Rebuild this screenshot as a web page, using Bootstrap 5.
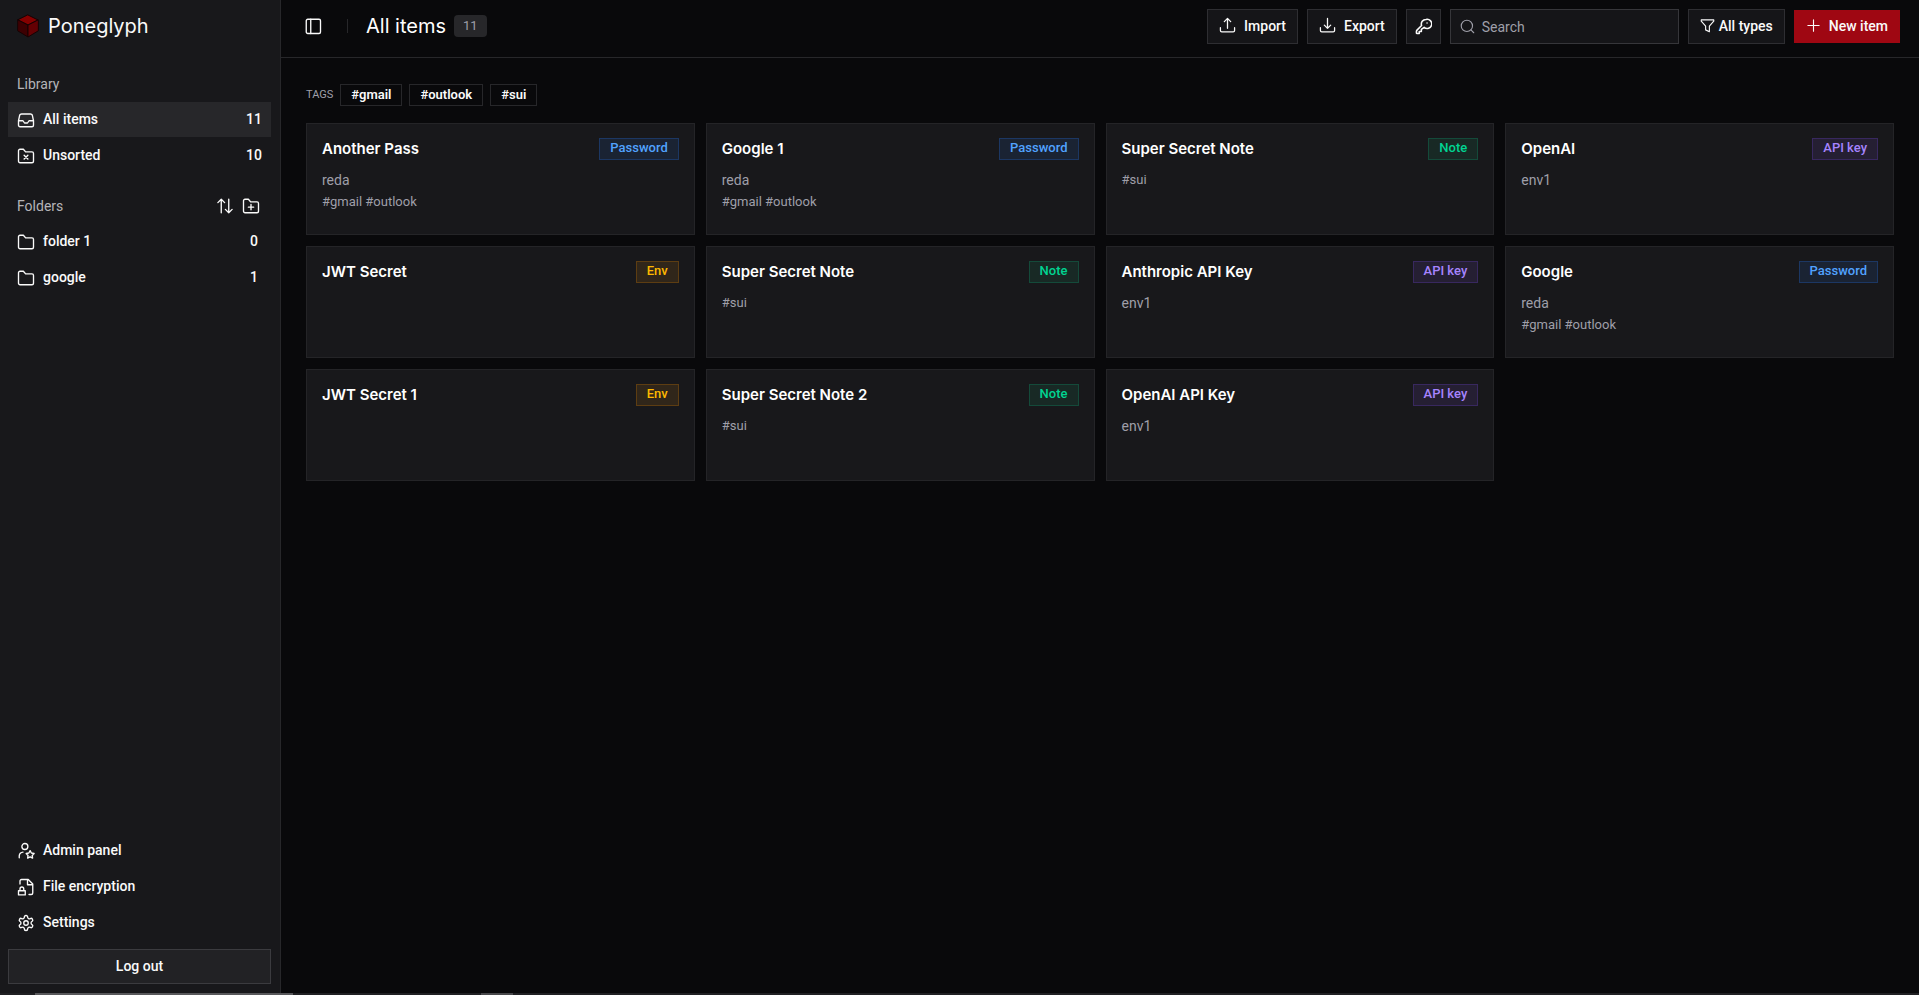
<!DOCTYPE html>
<html lang="en" data-bs-theme="dark">
<head>
<meta charset="utf-8">
<meta name="viewport" content="width=device-width, initial-scale=1">
<title>Poneglyph</title>
<link href="https://cdn.jsdelivr.net/npm/bootstrap@5.3.0/dist/css/bootstrap.min.css" rel="stylesheet">
<style>
:root{--line:#27272a;--panel:#18181b;--muted:#9f9fa9}
body{background:#09090b;color:#fafafa;font-family:Roboto,"Liberation Sans",sans-serif;font-size:14px;line-height:20px}
svg{fill:none;stroke:currentColor;stroke-width:1.8;stroke-linecap:round;stroke-linejoin:round;flex:none}
.ico{width:18px;height:18px}
.ico-md{width:17px;height:17px}
.ico-sm{width:15px;height:15px}
.side{width:281px;background:var(--panel);border-right:1px solid var(--line);padding:0 9px 9px 8px}
.display-font{font-family:Inter,Roboto,sans-serif}
.brand{height:52px;padding-left:8px;gap:8px;font-size:20px;color:#fafafa}
.side-head{height:36px;margin-top:14px;padding:0 11px 0 9px;color:#b4b4b8}
.side .nav-link{height:35px;margin-bottom:1px;padding:0 9px;gap:8px;color:#fafafa;font-weight:500}
.side .nav-link span{padding-bottom:2px}
.side .nav-link.active{background:#27272a}
.tool{background:none;border:0;padding:0;color:#fafafa;display:flex}
.flat{border:1px solid #2e2e32;background:#151518;color:#fafafa;border-radius:0;height:35px;font-size:14px;font-weight:500;line-height:20px;padding:0 11px 2px;display:flex;align-items:center;justify-content:center}
.flat:hover{background:#27272a;color:#fafafa}
.logout{background:#222225;border-color:#3b3b3f}
.topbar{height:58px;border-bottom:1px solid var(--line);padding:0 19px 4px 23px}
.heading{padding-bottom:2px}
.actions{gap:9px}
.rule{width:1px;height:14px;background:#27272a;margin:0 18px 0 25px}
.count{background:#27272a;color:var(--muted);border-radius:4px;height:22px;padding:0 9px;font-size:13px}
.search{width:229px;height:35px;border:1px solid #36363a;background:#151518;padding:0 9px;gap:7px;color:var(--muted)}
.search input{background:none;border:0;outline:0;color:#fafafa;min-width:0;padding:0;width:100%}
.search input::placeholder{color:var(--muted);opacity:1}
.new{background:#9f0712;border-color:#9f0712;height:33px}
.content{padding:26px 25px}
.tags{gap:7px;margin-bottom:17px}
.tag-label{color:var(--muted);font-size:11px}
.tag{height:22px;border:1px solid #27272a;background:none;color:#fafafa;font-size:13px;font-weight:600;padding:0 10px;line-height:18px}
.items{display:grid;grid-template-columns:repeat(4,minmax(0,1fr));gap:11px}
.item{background:var(--panel);border:1px solid #242427;height:112px;padding:14px 15px}
.item-top{display:flex;justify-content:space-between;margin-bottom:9px}
.item h2{font-size:15px;line-height:22px;font-weight:600;margin:0}
.item p{margin:0;color:var(--muted);line-height:22px}
.item .hash{font-size:13px}
.kind{height:22px;border:1px solid;font-size:13px;line-height:18px;font-weight:500;padding:0 10px}
.k-pass{color:#51a2ff;background:#1a2333;border-color:#1c3763}
.k-note{color:#00d492;background:#182925;border-color:#144a3a}
.k-api{color:#a684ff;background:#251f33;border-color:#38285f}
.k-env{color:#ffb900;background:#30261a;border-color:#5d3d12}
.edge{height:2px;background:#202023}
.edge i{width:32px;background:#48484b}
.edge i:first-child{width:258px;background:#58585b;margin:0 188px 0 35px}
</style>
</head>
<body>
<svg width="0" height="0" class="position-absolute" aria-hidden="true">
<symbol id="inbox" viewBox="0 0 24 24"><path d="M22 13h-6l-2 3h-4l-2-3H2M6 4h12c1 0 2 .5 2.400 1.500L22 13v6a2 2 0 0 1-2 2H4a2 2 0 0 1-2-2v-6l1.600-7.500C4 4.500 5 4 6 4z"/></symbol>
<symbol id="folder" viewBox="0 0 24 24"><path d="M4 3h4.500l3 3.500H20a2 2 0 0 1 2 2V19a2 2 0 0 1-2 2H4a2 2 0 0 1-2-2V5a2 2 0 0 1 2-2z"/></symbol>
</svg>
<div class="d-flex flex-column min-vh-100">
<div class="d-flex flex-grow-1">
<aside class="side d-flex flex-column flex-shrink-0">
  <a href="#" class="brand display-font d-flex align-items-center text-decoration-none">
    <svg width="24" height="24" viewBox="0 0 24 24" style="stroke:#160203;stroke-width:1"><path fill="#850000" d="M12 1l10 5-10 5L2 6z"/><path fill="#3d0002" d="M2 6l10 5v12L2 17z"/><path fill="#640003" d="M22 6l-10 5v12l10-6z"/></svg>
    <span>Poneglyph</span></a>
  <div class="side-head d-flex align-items-center">Library</div>
  <nav class="nav flex-column">
    <a href="#" class="nav-link active d-flex align-items-center"><svg class="ico"><use href="#inbox"/></svg><span>All items</span><span class="ms-auto">11</span></a>
    <a href="#" class="nav-link d-flex align-items-center"><svg class="ico" viewBox="0 0 24 24"><use href="#folder"/><path d="M9.500 11l5 5m0-5l-5 5"/></svg><span>Unsorted</span><span class="ms-auto">10</span></a>
  </nav>
  <div class="side-head d-flex align-items-center">
    <span>Folders</span>
    <span class="d-flex gap-2 ms-auto">
      <button class="tool" aria-label="Sort folders"><svg class="ico" viewBox="0 0 24 24"><path d="M7 21V3M2.500 7.500L7 3l4.500 4.500M17 3v18m-4.500-4.500L17 21l4.500-4.500"/></svg></button>
      <button class="tool" aria-label="New folder"><svg class="ico" viewBox="0 0 24 24"><use href="#folder"/><path d="M12 10v7m-3.500-3.500h7"/></svg></button>
    </span>
  </div>
  <nav class="nav flex-column">
    <a href="#" class="nav-link d-flex align-items-center"><svg class="ico"><use href="#folder"/></svg><span>folder 1</span><span class="ms-auto me-1">0</span></a>
    <a href="#" class="nav-link d-flex align-items-center"><svg class="ico"><use href="#folder"/></svg><span>google</span><span class="ms-auto me-1">1</span></a>
  </nav>
  <nav class="nav flex-column mt-auto mb-2">
    <a href="#" class="nav-link d-flex align-items-center"><svg class="ico" viewBox="0 0 24 24"><circle cx="10.500" cy="6" r="4"/><path d="M3 21v-2.500A5.500 5.500 0 0 1 8 13.500M17.500 11.500l1.700 3.200 3.600.6-2.500 2.600.5 3.600-3.300-1.600-3.300 1.600.5-3.600-2.500-2.600 3.600-.6z"/></svg><span>Admin panel</span></a>
    <a href="#" class="nav-link d-flex align-items-center"><svg class="ico" viewBox="0 0 24 24"><path d="M4 8V4a2 2 0 0 1 2-2h9l6 6v12a2 2 0 0 1-2 2h-3M14 2v7h7M2 17h9v5.500H2zM4 17v-2.500a2.500 2.500 0 0 1 5 0V17"/></svg><span>File encryption</span></a>
    <a href="#" class="nav-link d-flex align-items-center"><svg class="ico" viewBox="0 0 24 24"><path d="M12.200 2h-.4a2 2 0 0 0-2 2v.2a2 2 0 0 1-1 1.700l-.4.300a2 2 0 0 1-2 0l-.2-.1a2 2 0 0 0-2.700.7l-.2.400a2 2 0 0 0 .7 2.700l.2.100a2 2 0 0 1 1 1.700v.5a2 2 0 0 1-1 1.800l-.2.100a2 2 0 0 0-.7 2.700l.2.400a2 2 0 0 0 2.700.7l.2-.1a2 2 0 0 1 2 0l.4.300a2 2 0 0 1 1 1.700v.2a2 2 0 0 0 2 2h.4a2 2 0 0 0 2-2v-.2a2 2 0 0 1 1-1.700l.4-.3a2 2 0 0 1 2 0l.2.100a2 2 0 0 0 2.700-.7l.2-.4a2 2 0 0 0-.7-2.700l-.2-.1a2 2 0 0 1-1-1.700v-.5a2 2 0 0 1 1-1.800l.2-.1a2 2 0 0 0 .7-2.700l-.2-.4a2 2 0 0 0-2.700-.7l-.2.100a2 2 0 0 1-2 0l-.4-.3a2 2 0 0 1-1-1.700V4a2 2 0 0 0-2-2z"/><circle cx="12" cy="12" r="3"/></svg><span>Settings</span></a>
  </nav>
  <button class="flat logout btn w-100">Log out</button>
</aside>
<main class="flex-grow-1">
  <header class="topbar d-flex align-items-center">
    <div class="heading d-flex align-items-center">
      <button class="tool" aria-label="Toggle sidebar"><svg class="ico" viewBox="0 0 24 24"><rect x="3" y="3" width="19" height="19" rx="2"/><path d="M9 3v19"/></svg></button>
      <span class="rule"></span>
      <h1 class="display-font m-0 fw-normal fs-5">All items</h1>
      <span class="count ms-2 d-flex align-items-center">11</span>
    </div>
    <div class="actions d-flex align-items-center ms-auto">
      <button class="flat btn gap-2"><svg class="ico-md" viewBox="0 0 24 24"><path d="M2 15v4a2 2 0 0 0 2 2h16a2 2 0 0 0 2-2v-4M12 16V2M7.500 6.500L12 2l4.500 4.500"/></svg>Import</button>
      <button class="flat btn gap-2"><svg class="ico-md" viewBox="0 0 24 24"><path d="M2 15v4a2 2 0 0 0 2 2h16a2 2 0 0 0 2-2v-4M12 2v14m-4.500-4.500L12 16l4.500-4.500"/></svg>Export</button>
      <button class="flat btn px-2 pb-0" aria-label="Password generator"><svg class="ico-md" viewBox="0 0 24 24"><path d="M15.500 2a6.500 6.500 0 0 0-6.200 8.600l-6.500 6.500a3 3 0 0 0-.8 2V21a1 1 0 0 0 1 1h3v-3h3v-3l2-1.500 1.900-1.300A6.500 6.500 0 1 0 15.500 2zM17 7h.01" stroke-width="2.200"/></svg></button>
      <label class="search d-flex align-items-center"><svg class="ico-sm" viewBox="0 0 24 24"><circle cx="11" cy="11" r="9"/><path d="M17.500 17.500L22 22"/></svg><input type="search" placeholder="Search" aria-label="Search"></label>
      <button class="flat btn gap-1"><svg class="ico-sm" viewBox="0 0 24 24"><path d="M2 3h20v2l-7 8v9l-6-3v-6L2 5z"/></svg>All types</button>
      <button class="flat new btn gap-2"><svg class="ico-sm" viewBox="0 0 24 24"><path d="M12 3v18M3 12h18"/></svg>New item</button>
    </div>
  </header>
  <section class="content">
    <div class="tags d-flex align-items-center"><span class="tag-label">TAGS</span><button class="tag">#gmail</button><button class="tag">#outlook</button><button class="tag">#sui</button></div>
    <div class="items">
      <article class="item"><div class="item-top"><h2 class="display-font">Another Pass</h2><span class="kind k-pass">Password</span></div><p>reda</p><p class="hash">#gmail #outlook</p></article>
      <article class="item"><div class="item-top"><h2 class="display-font">Google 1</h2><span class="kind k-pass">Password</span></div><p>reda</p><p class="hash">#gmail #outlook</p></article>
      <article class="item"><div class="item-top"><h2 class="display-font">Super Secret Note</h2><span class="kind k-note">Note</span></div><p class="hash">#sui</p></article>
      <article class="item"><div class="item-top"><h2 class="display-font">OpenAI</h2><span class="kind k-api">API key</span></div><p>env1</p></article>
      <article class="item"><div class="item-top"><h2 class="display-font">JWT Secret</h2><span class="kind k-env">Env</span></div></article>
      <article class="item"><div class="item-top"><h2 class="display-font">Super Secret Note</h2><span class="kind k-note">Note</span></div><p class="hash">#sui</p></article>
      <article class="item"><div class="item-top"><h2 class="display-font">Anthropic API Key</h2><span class="kind k-api">API key</span></div><p>env1</p></article>
      <article class="item"><div class="item-top"><h2 class="display-font">Google</h2><span class="kind k-pass">Password</span></div><p>reda</p><p class="hash">#gmail #outlook</p></article>
      <article class="item"><div class="item-top"><h2 class="display-font">JWT Secret 1</h2><span class="kind k-env">Env</span></div></article>
      <article class="item"><div class="item-top"><h2 class="display-font">Super Secret Note 2</h2><span class="kind k-note">Note</span></div><p class="hash">#sui</p></article>
      <article class="item"><div class="item-top"><h2 class="display-font">OpenAI API Key</h2><span class="kind k-api">API key</span></div><p>env1</p></article>
    </div>
  </section>
</main>
</div>
<div class="edge d-flex" aria-hidden="true"><i></i><i></i></div>
</div>
<script src="https://cdn.jsdelivr.net/npm/bootstrap@5.3.0/dist/js/bootstrap.bundle.min.js"></script>
</body>
</html>
